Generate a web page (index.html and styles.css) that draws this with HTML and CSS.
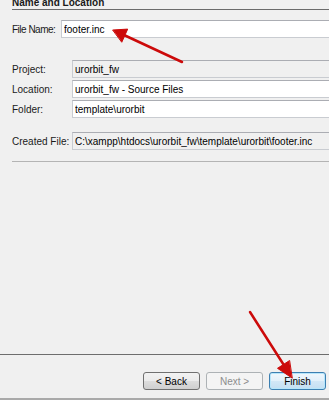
FILE: index.html
```html
<!DOCTYPE html>
<html lang="en">

<head>
  <meta charset="UTF-8">
  <meta name="viewport" content="width=device-width, initial-scale=1.0">
  <title>New File - Name and Location</title>
  <link rel="stylesheet" href="styles.css">
</head>

<body>

  <div class="wizard">
    <div class="content">
      <div class="section-title">Name and Location</div>

      <div class="row row-name">
        <label for="fileName">File Name:</label>
        <input type="text" id="fileName" class="field" value="footer.inc">
      </div>

      <div class="group">
        <div class="row">
          <label for="project">Project:</label>
          <input type="text" id="project" class="field readonly" value="urorbit_fw" readonly>
        </div>
        <div class="row">
          <label for="location">Location:</label>
          <input type="text" id="location" class="field" value="urorbit_fw - Source Files">
        </div>
        <div class="row">
          <label for="folder">Folder:</label>
          <input type="text" id="folder" class="field" value="template\urorbit">
        </div>
      </div>

      <div class="row row-created">
        <label for="created">Created File:</label>
        <input type="text" id="created" class="field readonly" value="C:\xampp\htdocs\urorbit_fw\template\urorbit\footer.inc" readonly>
      </div>

      <div class="separator"></div>
    </div>

    <div class="buttons">
      <button type="button" class="btn">&lt; Back</button>
      <button type="button" class="btn" disabled>Next &gt;</button>
      <button type="button" class="btn btn-default">Finish</button>
    </div>

    <!-- red annotation arrows drawn over the dialog -->
    <svg class="annotations" width="329" height="400" viewBox="0 0 329 400">
      <g stroke="#cc0a0a" stroke-width="2.5" fill="#cc0a0a" stroke-linecap="round">
        <line x1="182" y1="62" x2="125" y2="35.5" />
        <polygon points="113,30 127.7,29.1 121.9,41.9" stroke-width="1" />
        <line x1="250" y1="312" x2="283.5" y2="364.5" />
        <polygon points="292,378 277.5,368.3 289.3,360.7" stroke-width="1" />
      </g>
    </svg>
  </div>

</body>

</html>
```

FILE: styles.css
```css
body {
  margin: 0;
  padding: 0;
  background-color: #f0f0f0;
  font-family: "Liberation Sans", Arial, sans-serif;
  font-size: 10px;
  color: #1a1a1a;
}

.wizard {
  position: relative;
  width: 329px;
  height: 400px;
  overflow: hidden;
  display: flex;
  flex-direction: column;
}

.content {
  flex: 1;
  padding-left: 12px;
}

.section-title {
  margin-top: -4px;
  line-height: 13px;
  font-weight: bold;
  border-bottom: 1px solid #6b6b6b;
}

.row {
  display: grid;
  grid-template-columns: 60px 1fr;
  align-items: center;
  height: 18px;
}

.row label {
  white-space: nowrap;
}

.row-name {
  grid-template-columns: 49px 1fr;
  margin-top: 10px;
}

.row-name label {
  letter-spacing: -0.5px;
}

.group {
  display: flex;
  flex-direction: column;
  gap: 2px;
  margin-top: 22px;
}

.row-created {
  margin-top: 14px;
}

.field {
  height: 18px;
  width: calc(100% + 4px);
  box-sizing: border-box;
  margin: 0;
  padding: 0 2px;
  border: 1px solid #c9ccd1;
  border-top-color: #abadb3;
  background-color: #fff;
  font-family: inherit;
  font-size: 10px;
  color: #000;
  outline: none;
}

.field.readonly {
  background-color: #f0f0f0;
}

.separator {
  margin-top: 11px;
  border-top: 1px solid #b4b4b4;
}

.buttons {
  display: flex;
  justify-content: flex-end;
  gap: 6px;
  height: 18px;
  padding: 17px 3px 8px 0;
  border-top: 1px solid #6d6d6d;
  border-bottom: 2px solid #a9a9a9;
}

.btn {
  width: 57px;
  height: 18px;
  padding: 0;
  border: 1px solid #707070;
  border-radius: 3px;
  background: linear-gradient(#f2f2f2 0%, #ebebeb 50%, #dddddd 51%, #cfcfcf 100%);
  font-family: inherit;
  font-size: 10px;
  color: #000;
}

.btn:disabled {
  border-color: #adb2b5;
  background: #f4f4f4;
  color: #8d8d8d;
}

.btn-default {
  border-color: #3c7fb1;
  box-shadow: inset 0 0 0 1px #b7e6fb;
  background: linear-gradient(#f0f7fc 0%, #e2f0fa 50%, #d2e7f6 51%, #c4dff2 100%);
}

.annotations {
  position: absolute;
  top: 0;
  left: 0;
  pointer-events: none;
}
```
